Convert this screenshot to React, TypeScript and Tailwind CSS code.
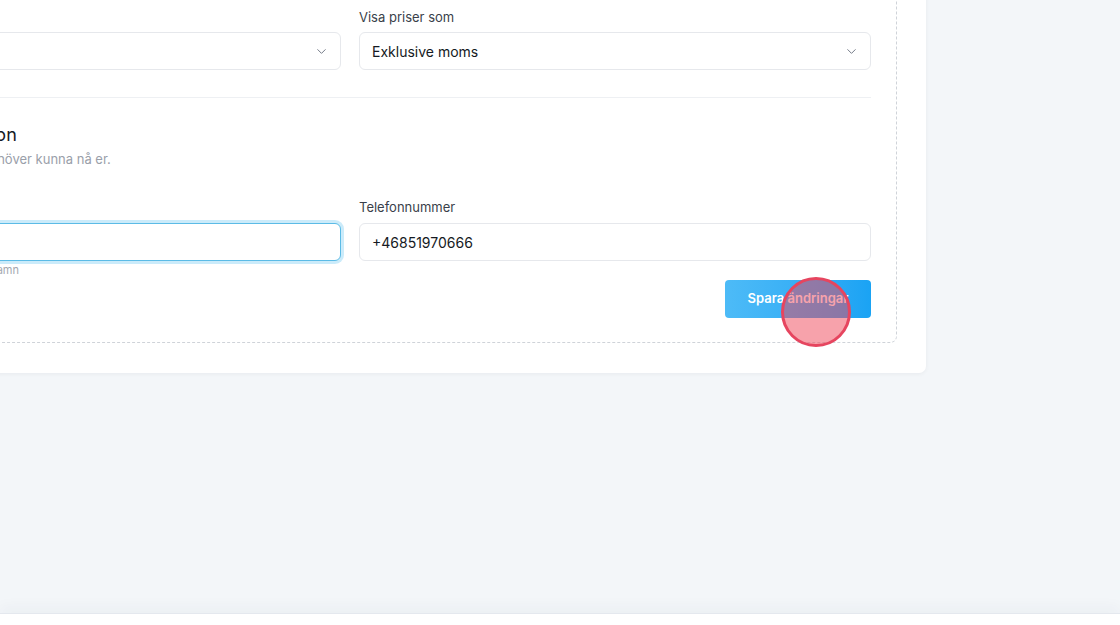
import React from "react";
import { ChevronDown } from "lucide-react";

const font = { fontFamily: '"Inter", "Liberation Sans", sans-serif' };

function Select({ value }: { value: string }) {
  return (
    <div className="flex h-[38px] items-center justify-between rounded-[6px] border border-[#e6e8ec] bg-white pl-[12px] pr-[11px]">
      <span className="text-[14px] font-normal text-[#151a23]">{value}</span>
      <ChevronDown size={15} strokeWidth={1.5} className="text-[#6b7280]" />
    </div>
  );
}

export default function App() {
  return (
    <div className="relative flex h-[625px] w-[1120px] flex-col overflow-hidden bg-[#f3f6f9]" style={font}>
      <div className="flex-1">
        <div className="ml-[-226px] mt-[-50px] w-[1152px] rounded-[7px] bg-white px-[29px] pb-[30px] pt-[30px] shadow-[0_1px_4px_rgba(15,23,42,0.05)]">
          <div className="rounded-[7px] border border-dashed border-[#cfd3d9] px-[25px] pb-[24px] pt-[26px]">
            <div className="grid grid-cols-2 gap-x-[18px]">
              <div>
                <div className="mb-[5px] text-[13px] leading-[20px] text-[#3a3f4a]">Språk</div>
                <Select value="Svenska" />
              </div>
              <div>
                <div className="mb-[5px] text-[13px] leading-[20px] text-[#3a3f4a]">Visa priser som</div>
                <Select value="Exklusive moms" />
              </div>
            </div>

            <div className="mt-[27px] border-t border-[#eef0f3]" />

            <div className="mt-[23px] text-[18px] leading-[28px] tracking-[0.3px] text-[#151a23]">Er kontaktinformation</div>
            <div className="text-[13px] leading-[20px] text-[#9aa0aa]">Uppgifter för hur kunder behöver kunna nå er.</div>

            <div className="mt-[28px] grid grid-cols-2 gap-x-[18px]">
              <div>
                <div className="mb-[6px] text-[13px] leading-[20px] text-[#3a3f4a]">E-post</div>
                <div className="h-[38px] rounded-[6px] border-[1.5px] border-[#5bbbe6] bg-white shadow-[0_0_0_3px_rgba(140,210,245,0.45)]" />
                <div className="mt-[2px] text-[11px] leading-[14px] text-[#a3a8b1]">Visas för kunder som avsändarnamn</div>
              </div>
              <div>
                <div className="mb-[6px] text-[13px] leading-[20px] text-[#3a3f4a]">Telefonnummer</div>
                <div className="flex h-[38px] items-center rounded-[6px] border border-[#e6e8ec] bg-white pl-[12px]">
                  <span className="text-[14px] font-normal text-[#151a23]">+46851970666</span>
                </div>
              </div>
            </div>

            <div className="mt-[3px] flex justify-end">
              <button className="h-[38px] w-[146px] rounded-[4px] bg-gradient-to-r from-[#4dbbf7] to-[#1aa3f4] text-[13px] font-semibold text-white">
                Spara ändringar
              </button>
            </div>
          </div>
        </div>
      </div>

      <div className="h-[12px] border-t border-[#e4e8ee] bg-white shadow-[0_-6px_14px_rgba(30,50,80,0.04)]" />

      <div className="pointer-events-none absolute left-[781px] top-[277px] h-[70px] w-[70px] rounded-full border-[3px] border-[#e6455f] bg-[rgba(239,69,88,0.5)]" />
    </div>
  );
}
